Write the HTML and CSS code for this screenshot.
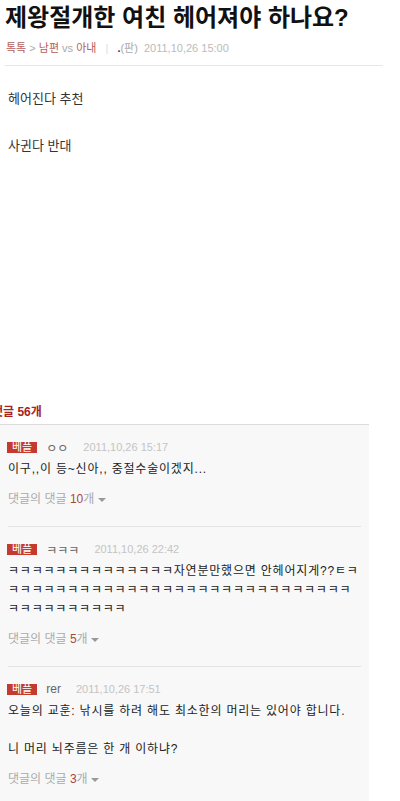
FILE: index.html
```html
<!DOCTYPE html>
<html lang="ko">
<head>
  <meta charset="UTF-8">
  <title>제왕절개한 여친 헤어져야 하나요?</title>
  <link rel="stylesheet" href="styles.css">
</head>
<body>

  <div class="post">
    <h1>제왕절개한 여친 헤어져야 하나요?</h1>
    <div class="meta">
      <a class="cat">톡톡</a> <span class="arrow">&gt;</span> <a class="cat">남편 <span class="vs">vs</span> 아내</a>
      <span class="bar">|</span>
      <span class="writer"><b>.</b>(판)</span>
      <span class="date">2011,10,26 15:00</span>
    </div>
    <div class="content">
      <p>헤어진다 추천</p>
      <p>사귄다 반대</p>
    </div>
  </div>

  <div class="comments">
    <h3>댓글 56개</h3>
    <ul class="list">
      <li class="item">
        <div class="head">
          <span class="best">베플</span>
          <span class="name">ㅇㅇ</span>
          <span class="date">2011,10,26 15:17</span>
        </div>
        <p class="text">이구,,이 등~신아,, 중절수술이겠지...</p>
        <a class="reply">댓글의 댓글 <em>10</em>개 <span class="caret"></span></a>
      </li>
      <li class="item">
        <div class="head">
          <span class="best">베플</span>
          <span class="name">ㅋㅋㅋ</span>
          <span class="date">2011,10,26 22:42</span>
        </div>
        <p class="text">ㅋㅋㅋㅋㅋㅋㅋㅋㅋㅋㅋㅋㅋㅋ자연분만했으면 안헤어지게??ㅌㅋㅋㅋㅋㅋㅋㅋㅋㅋㅋㅋㅋㅋㅋㅋㅋㅋㅋㅋㅋㅋㅋㅋㅋㅋㅋㅋㅋㅋㅋㅋㅋㅋㅋㅋㅋㅋㅋㅋㅋ</p>
        <a class="reply">댓글의 댓글 <em>5</em>개 <span class="caret"></span></a>
      </li>
      <li class="item">
        <div class="head">
          <span class="best">베플</span>
          <span class="name">rer</span>
          <span class="date">2011,10,26 17:51</span>
        </div>
        <p class="text">오늘의 교훈: 낚시를 하려 해도 최소한의 머리는 있어야 합니다.<br><br>니 머리 뇌주름은 한 개 이하냐?</p>
        <a class="reply">댓글의 댓글 <em>3</em>개 <span class="caret"></span></a>
      </li>
    </ul>
  </div>

</body>
</html>
```

FILE: styles.css
```css
body {
  margin: 0;
  padding: 0;
  font-family: "Liberation Sans", "Noto Sans CJK KR", sans-serif;
  color: #333;
  background: #fff;
}

.post {
  padding: 0 17px 0 5px;
}

h1 {
  margin: 0;
  padding-top: 3px;
  font-size: 24px;
  line-height: 30px;
  font-weight: bold;
  color: #111;
  white-space: nowrap;
}

.meta {
  margin-top: 7px;
  padding: 0 0 9px 1px;
  font-size: 11px;
  line-height: 16px;
  color: #aaa;
  border-bottom: 1px solid #e6e6e6;
  white-space: nowrap;
}

.meta .cat {
  color: #b4605c;
}

.meta .arrow,
.meta .vs {
  color: #aaa;
}

.meta .bar {
  color: #ddd;
  margin: 0 6px;
}

.meta .writer b {
  color: #333;
}

.meta .date {
  color: #bbb;
  margin-left: 3px;
}

.content {
  padding: 24px 3px 0;
  height: 313px;
  font-size: 13px;
  line-height: 18px;
  color: #333;
}

.content p {
  margin: 0 0 29px;
}

.comments h3 {
  margin: 0 0 0 -8px;
  font-size: 12px;
  line-height: 18px;
  color: #a8231c;
  font-weight: bold;
  padding-bottom: 3px;
}

.list {
  list-style: none;
  margin: 0;
  padding: 0 8px;
  width: 353px;
  background: #f8f8f8;
  border-top: 1px solid #dcdcdc;
}

.item {
  padding: 14px 0 19px;
  border-top: 1px solid #e4e4e4;
}

.item:first-child {
  border-top: none;
}

.head {
  display: flex;
  align-items: center;
  height: 16px;
  font-size: 11px;
}

.best {
  background: #c43a2e;
  color: #fff;
  font-size: 11px;
  line-height: 11px;
  padding: 0 5px;
  height: 11px;
  margin: 0 9px 0 -1px;
}

.name {
  color: #666;
  font-size: 12px;
  margin-right: 15px;
}

.head .date {
  color: #c4c4c4;
}

.text {
  margin: 5px 0 0;
  font-size: 12px;
  line-height: 19px;
  letter-spacing: 0.8px;
  color: #222;
  word-break: break-all;
}

.reply {
  display: block;
  margin-top: 12px;
  font-size: 12px;
  line-height: 16px;
  color: #aaa;
}

.reply em {
  font-style: normal;
  color: #a8463c;
}

.caret {
  display: inline-block;
  width: 0;
  height: 0;
  border-left: 4px solid transparent;
  border-right: 4px solid transparent;
  border-top: 4px solid #999;
  vertical-align: middle;
}
```
